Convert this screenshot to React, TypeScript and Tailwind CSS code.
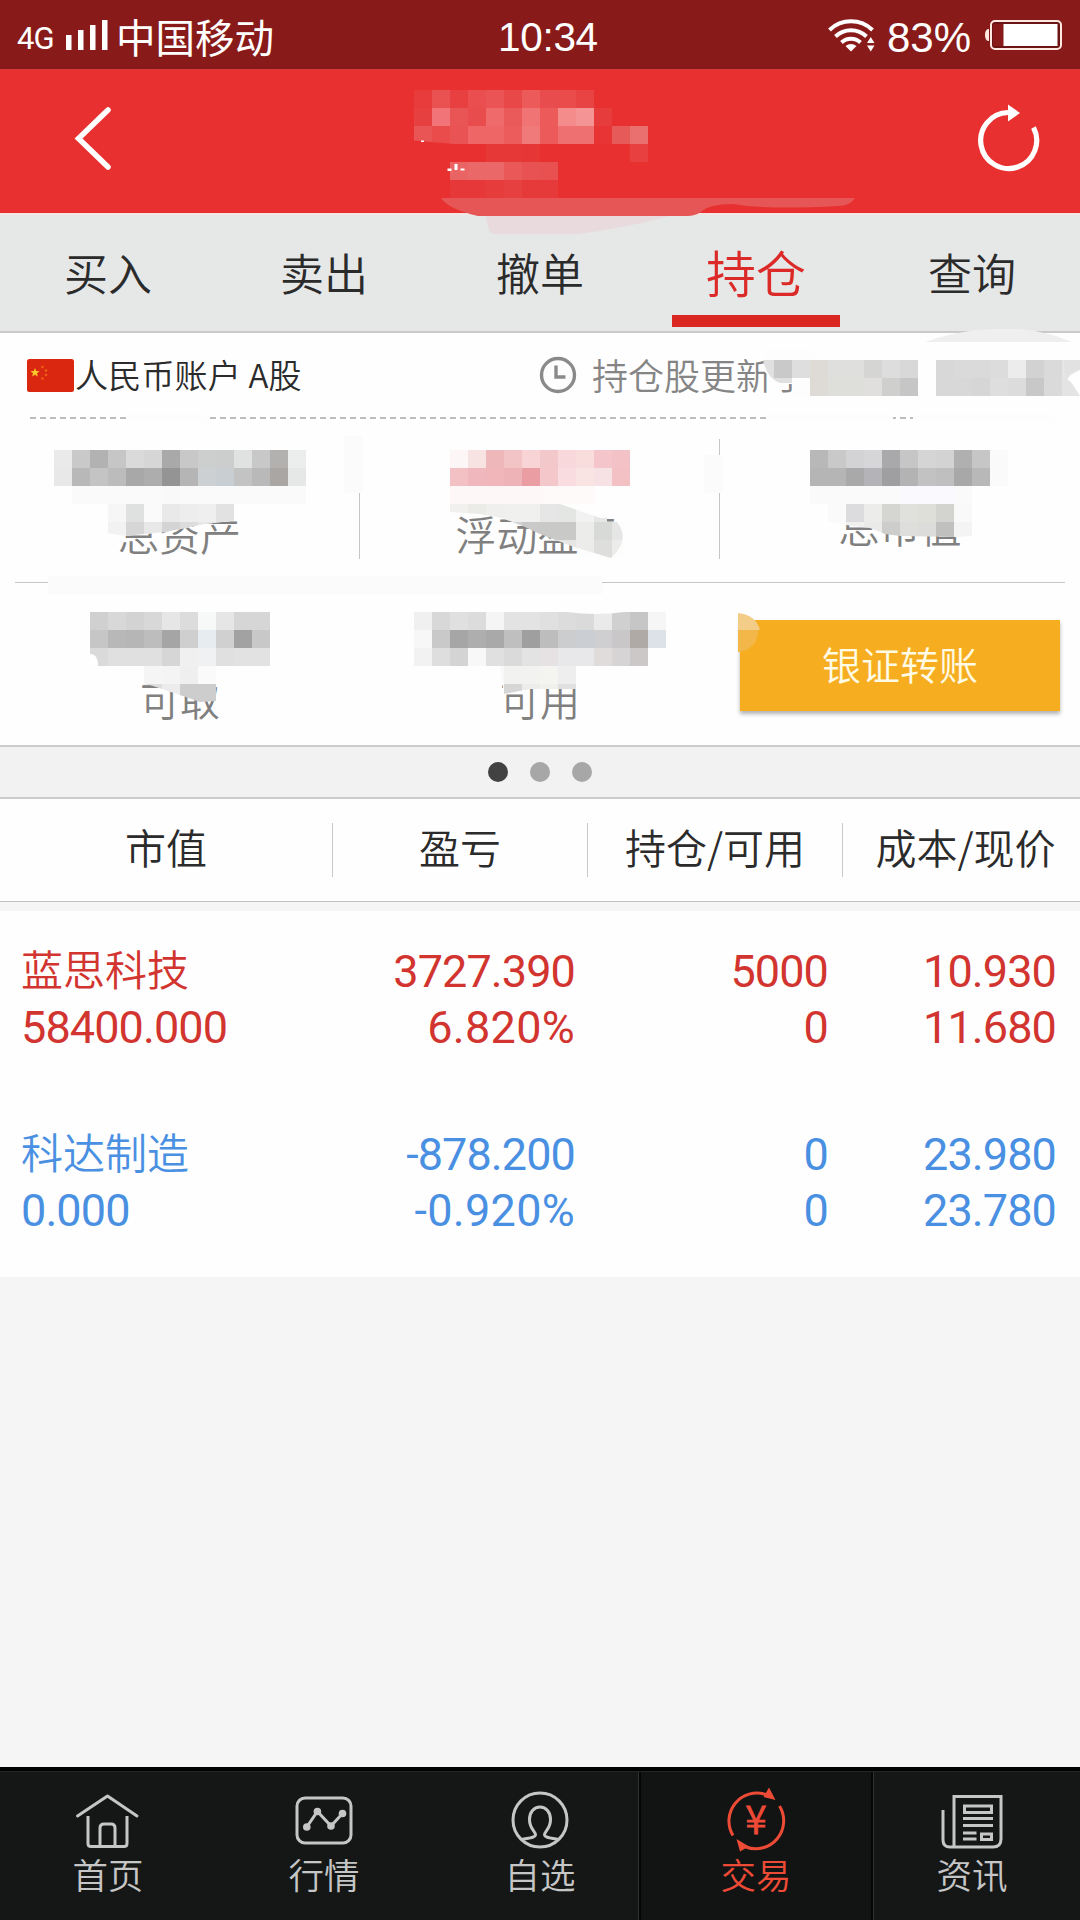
import type { ReactNode } from 'react'

const CELL = 18

const TABS = ['买入', '卖出', '撤单', '持仓', '查询']

const HOLDINGS = [
  {
    name: '蓝思科技',
    value: '58400.000',
    profit: ['3727.390', '6.820%'],
    amount: ['5000', '0'],
    price: ['10.930', '11.680'],
    color: 'text-[#d2342f]',
  },
  {
    name: '科达制造',
    value: '0.000',
    profit: ['-878.200', '-0.920%'],
    amount: ['0', '0'],
    price: ['23.980', '23.780'],
    color: 'text-[#4a90e2]',
  },
]

// One row of privacy blocks, colours separated by spaces ("-" leaves a gap)
function Blocks({ x, y, row }: { x: number; y: number; row: string }) {
  return (
    <g shapeRendering="crispEdges">
      {row.split(' ').map((c, i) =>
        c === '-' ? null : (
          <rect key={i} x={x + i * CELL} y={y} width={CELL} height={CELL} fill={`#${c}`} />
        )
      )}
    </g>
  )
}

function Overlay({ viewBox, children }: { viewBox: string; children: ReactNode }) {
  return (
    <svg className="pointer-events-none absolute inset-0 h-full w-full overflow-visible" viewBox={viewBox}>
      {children}
    </svg>
  )
}

function StatusBar() {
  return (
    <div className="flex h-[69px] items-center bg-[#881b1a] pl-[17px] pr-[18px] text-white">
      <div className="flex w-[481px] items-center">
        <span className="mt-2 w-[49px] font-['Roboto'] text-[31px] font-normal leading-none tracking-[-1px]">4G</span>
        <svg className="h-8 w-[42px]" viewBox="66 19 42 32" fill="#fff">
          <rect x="66" y="35" width="5.5" height="15" />
          <rect x="78" y="30" width="5.5" height="20" />
          <rect x="90" y="25" width="5.5" height="25" />
          <rect x="102" y="20" width="5.5" height="30" />
        </svg>
        <span className="ml-2 mt-0.5 text-[39.500px] font-normal leading-none">中国移动</span>
      </div>
      <span className="mt-1.5 font-['Liberation_Sans'] text-[40.500px] leading-none tracking-[-0.3px]">10:34</span>
      <div className="flex flex-1 items-center justify-end">
        <svg className="h-[34px] w-[48px]" viewBox="826 17 48 34" fill="none" stroke="#fff" strokeWidth="4">
          <path d="M828.5 29a31 31 0 0 1 43 0" />
          <path d="M834.5 35.500a22.500 22.500 0 0 1 31 0" />
          <path d="M840.500 41.500a14 14 0 0 1 19 0" />
          <path d="M844.500 45q5.500-4 11 0l-5.500 5.500z" fill="#fff" stroke="none" />
          <path d="M866 42h7.500l-3.750-6zM866 44.500h7.500l-3.750 6z" fill="#fff" stroke="none" />
        </svg>
        <span className="ml-3 mt-1.5 font-['Liberation_Sans'] text-[42px] leading-none">83%</span>
        <svg className="ml-[13px] h-8 w-[78px]" viewBox="984 18 78 32">
          <path d="M989 28h-1q-3 1-3 6t3 6h1z" fill="#ffe9e2" />
          <rect x="991" y="20" width="70" height="28" rx="4" fill="#6b1414" stroke="#ffe9e2" strokeWidth="2" />
          <rect x="993" y="23" width="11" height="22" fill="#881b1a" />
          <rect x="1003.500" y="23" width="54" height="22" fill="#fff" />
        </svg>
      </div>
    </div>
  )
}

function Header() {
  return (
    <header className="relative z-10 flex h-36 items-center justify-between border-t border-[#d43a37] bg-[#e7302f] pl-[74px] pr-[40px]">
      <svg className="mb-2 h-[66px] w-10" viewBox="74 105 40 66" fill="none" stroke="#fff" strokeWidth="5.500" strokeLinecap="round">
        <path d="M108 110 78.500 138.500 108 167" />
      </svg>
      <svg className="mb-2 h-[70px] w-[64px]" viewBox="976 104 64 70">
        <path d="M1008 113.500a28 28 0 1 0 25.500 15" fill="none" stroke="#fff" strokeWidth="5.200" />
        <path d="M1008 105.500v17l12-8.500z" fill="#fff" />
      </svg>
      <Overlay viewBox="0 70 1080 143">
        <Blocks x={414} y={90} row="e83b3b ea5252 e84040 ea4e4e ea5454 e94848 ec5a5a e94c4c ea4c4c e94444" />
        <Blocks x={414} y={108} row="e64040 f07478 e95555 e84c4c ef6a6a eb5a5a f07474 ec5a5a f58c8c f49494 e73c3c" />
        <Blocks x={414} y={126} row="e95454 ea4c4c e95353 ef6666 ef6666 ec5c5c f07a7a ec5a5a ee7070 ee7070 e83434 e75a5a ea7070" />
        <path d="M414 140.500l40 3.500h-40z" fill="#e7302f" />
        <Blocks x={486} y={144} row="e73838 e73838 e73636 - - - - - e84040" />
        <Blocks x={450} y={162} row="ea6464 eb6868 eb6868 ea5858 e95252 e95050" />
        <Blocks x={450} y={180} row="e63838 e63838 e63c3c e74040 e63a3a e63a3a" />
        <path d="M454.500 164h3v6h-3zM447.500 168.500h4v2.500h-4zM460.500 168.500h4v2h-4zM421 140.500h3v1.500h-3z" fill="#fff" />
        <path d="M441 198H855q-5 8-17 8-70 4-105-2-24 0-32 8-6 4-14 4H478q-30-7-37-18z" fill="#e65656" />
        <path d="M486 216H670Q620 229 578 234H494q-6 0-8-18z" fill="#e8dadd" />
      </Overlay>
    </header>
  )
}

function Tabs() {
  return (
    <nav className="grid h-[120px] grid-cols-5 border-t-2 border-b-2 border-t-[#f3e6e3] border-b-[#c9c9c9] bg-[#e6e7e7] text-center text-[44px] leading-[60px] text-[#2b2b2b]">
      {TABS.map((tab) =>
        tab === '持仓' ? (
          <div key={tab} className="flex flex-col items-center pt-[26px] text-[50px] text-[#db2a27]">
            {tab}
            <div className="mt-3.5 h-3 w-[168px] bg-[#db2722]" />
          </div>
        ) : (
          <div key={tab} className="pt-[27px]">
            {tab}
          </div>
        )
      )}
    </nav>
  )
}

function Flag() {
  return (
    <svg className="h-[33px] w-[47px]" viewBox="0 0 47 33">
      <rect width="47" height="33" rx="2.500" fill="#da2810" />
      <path d="m8 9 1.200 3 3.300.3-2.500 2 .8 3.200-2.800-1.800-2.800 1.800.8-3.200-2.500-2 3.300-.3z" fill="#fcc92c" />
      <g fill="#ec6018">
        <circle cx="15.500" cy="8" r="1.300" />
        <circle cx="19" cy="11.500" r="1.300" />
        <circle cx="19" cy="16" r="1.300" />
        <circle cx="15.500" cy="19.500" r="1.300" />
      </g>
    </svg>
  )
}

function AccountMask() {
  return (
    <Overlay viewBox="0 333 1080 412">
      <defs>
        <clipPath id="total">
          <path d="M108 504H240V520L205 524 165 532 124 536 108 533z" />
        </clipPath>
        <clipPath id="float">
          <path d="M450 504H560L600 518H607V522H617Q631 540 611 558L574 547 540 534 525 527 502 518 480 514 450 512z" />
        </clipPath>
        <clipPath id="market">
          <path d="M828 504H972V536L955 537 900 536 885 534 870 528 846 525 828 521z" />
        </clipPath>
        <clipPath id="take">
          <path d="M140 666H216V701L200 702 180 695 150 685 140 684z" />
        </clipPath>
        <clipPath id="use">
          <path d="M500 666H580V689H530L504 694z" />
        </clipPath>
      </defs>

      {/* update time */}
      <path d="M925 342Q955 331 990 329H1020Q1050 332 1072 342z" fill="#efefef" />
      <path d="M765 350H815V396H792V384H775L765 372z" fill="#fdfdfd" />
      <path d="M763 360H792V383H780Q767 378 763 360z" fill="#e0e0e0" />
      <Blocks x={774} y={360} row="c9c9c9 dedede dedbd6 dfdfdd dfdfdd d5d5d3 dddddd d8d8d8 - d8d8d8 dadada dadada dcdcdc ececec d2d2d2 dadada e6e6e6" />
      <Blocks x={810} y={378} row="dedbd6 dededb dededb e0dfdd cfcfcd c6c6c6 - d8d8d8 d8d8d8 d6d6d6 dedede dcdcdc c8c8c8 dadada e4e4e4" />
      <path d="M1080 370q-18 9-10 11 4 5 10 15z" fill="#fff" />
      <path d="M1064 360h16v10q-10-1-13 9-3-4-3-19z" fill="#e2e2e2" />

      {/* erased parts of the rules */}
      <path d="M127 414h80v8h-80zM768 414h125v8h-125zM913 414h140v8h-140z" fill="#fdfdfd" />
      <path d="M344 436h18v57h-18zM704 455h18v38h-18z" fill="#fbfbfb" />
      <path d="M48 576h554v18H48z" fill="#fbfbfb" />

      <Blocks x={54} y={450} row="eaeaea c9c9c9 b2b2b2 c6c6c6 dadada d6d6d6 a9a9a9 c8c8c8 cdcfcf cccece e0e1e1 c8c8c8 b3b1b0 eceded" />
      <Blocks x={54} y={468} row="e8e8e8 b8b8b8 c4c4c4 bcbcbc a8a8a8 adadad 949494 b5b5b5 ccd0d2 c9ced3 c3c3c3 b9b9b9 a9a6a4 e6e8e8" />
      <Blocks x={72} y={486} row="fafafa fafafa fafafa fafafa fafafa f9f9f9 fafafa fafafa fafafa fafafa fafafa fafafa fafafa" />
      <g clipPath="url(#total)">
        <rect x="108" y="504" width="140" height="36" fill="#fff" />
        <Blocks x={108} y={504} row="f6f6f6 dfe0e0 fafafa e9e9e9 ededed efefef e2e2e2" />
        <Blocks x={108} y={522} row="f2f2f2 d6d6d6 e8e8e8 d4d4d4 dcdcdc e6e6e6" />
      </g>

      <Blocks x={450} y={450} row="fdf6f6 f8e3e3 eeb8ba f2c4c6 f8d4d6 f3c8cb f8d8da f9dcdc f4c6cb f3c2c6" />
      <Blocks x={450} y={468} row="f3c0c4 f0b8bc f0b6ba eeb3b7 ea9da3 f4c8cb f9dcdf f9e3e3 f6e1e4 f3c0c4" />
      <Blocks x={450} y={486} row="fdf8f7 fdf8f7 fdf8f7 fdf8f7 fdf8f7 fdfaf9 fdfaf9 fdfaf9" />
      <path d="M580 514H607V522H624V558H580z" fill="#fdfdfd" />
      <g clipPath="url(#float)">
        <Blocks x={450} y={504} row="f1f0ee ebebe8 efefed f0f0ee f0f0ee e6e6e6 e4e6e4 f2f2f2 e6e6e6 f2f2f2" />
        <Blocks x={450} y={522} row="f1f0ee ebebe8 e4e4e4 d4d4d4 c9c9c9 c9c9c7 c9c9c7 ececea d8dad8 e6e6e6" />
        <Blocks x={540} y={540} row="e6e6e6 e6e6e6 ececea dededc ececea" />
      </g>

      <Blocks x={810} y={450} row="b8b8b8 c9c9c9 d3d3d5 d6d6d9 a9a9ab c6c6c6 d5d5d5 d3d3d3 b0b0b0 c6c6c6 fafafa" />
      <Blocks x={810} y={468} row="b5b5b5 b5b5b5 a9a9a9 b3b3b8 9f9fa1 b3b3b3 c2c2c2 bfbfbf a8a8a8 b8b8b8 fafafa" />
      <Blocks x={810} y={486} row="fafafa fafafa fafafa fafafa fafafa fafafe fafafe fafafe fafafa" />
      <g clipPath="url(#market)">
        <Blocks x={828} y={504} row="fafafa dcdcde ececea d5d5d2 e0e0dc dedfd9 d3d3cf f9f9f9" />
        <Blocks x={828} y={522} row="fafafa f0f0ee eaeae8 cdcdcb dededc dcdcda c0c0be f4f4f4" />
      </g>

      <Blocks x={90} y={612} row="d0d0d0 d8d8d8 d3d3d3 d8d8d8 e6e6e6 dcdcdc f7f8f8 e6e6e6 d6d6d6 d6d6d6" />
      <Blocks x={90} y={630} row="c6c6c6 b8b8b8 b6b6b6 bdbdbd a5a5a5 cfcfcf e6ecf0 d0d0d0 a2a2a2 c8c8c8" />
      <Blocks x={90} y={648} row="dadada e0e0e0 e0e0e0 e0e0e0 d6d6d6 f0f0f0 eff1f2 e0e0e0 e2e2e2 e2e2e2" />
      <path d="M90 654q8 0 8 12h-8z" fill="#fff" />
      <g clipPath="url(#take)">
        <Blocks x={144} y={666} row="f5f5f5 f4f4f4 efefef fafafa" />
        <Blocks x={144} y={684} row="dedede ececec cdcdcd cdcdcd" />
      </g>

      <Blocks x={414} y={612} row="f0f0f0 d8d8d8 e0e0e0 dcdcdc f5f5f5 e3e3e3 e3e3e3 e0e0e0 dcdcdc dadada eaeaea d0d0d0 c6c6c6 f6f6f6" />
      <Blocks x={414} y={630} row="f7f7f7 c9c9c9 a6a6a6 aeaeae a9a9a9 bfbfbf 9f9f9f bdbdbd cccdcf cbcfd3 cfcfd1 c9c7c7 b0aaa6 dde2e8" />
      <Blocks x={414} y={648} row="f2f2f2 dedede d4d4d4 f8f8f8 e0e0e0 dadada e3e3e3 e6e2e4 e8e8ea e8e8ea e0dcdc d6d4d4 ccc8c8" />
      <path d="M566 612h58q-26 4-58 0z" fill="#fdfdfd" />
      <g clipPath="url(#use)">
        <Blocks x={486} y={666} row="f8f8f8 f2f2f0 f2f2f0 f4f4f0 eeeeee" />
        <Blocks x={486} y={684} row="fafafa d6d6d6 ececea f0f0ec e0e0e0" />
      </g>

      <path d="M738 613q18 2 22 17h-22z" fill="#f3cd88" />
      <path d="M738 630h20q0 18-18 22h-2z" fill="#f3b649" />
    </Overlay>
  )
}

function Account() {
  return (
    <section className="relative h-[412px] bg-[#fefefe]">
      <div className="flex h-[84px] items-center pl-[27px]">
        <Flag />
        <span className="mb-0.5 w-[465px] pl-px text-[33px] leading-none tracking-[0.2px] text-[#2b2b2b]">人民币账户 A股</span>
        <svg className="h-[38px] w-[38px]" viewBox="0 0 38 38" fill="none" stroke="#8a8a8a" strokeWidth="3.400">
          <circle cx="19" cy="19" r="16.500" />
          <path d="M17 9.500V21h9.500" />
        </svg>
        <span className="mb-0.5 pl-[15px] text-[36px] leading-none text-[#858585]">持仓股更新于</span>
      </div>
      <div className="ml-[30px] mr-[27px] h-0.5 bg-[repeating-linear-gradient(90deg,#bdbdbd_0_6px,transparent_6px_10px)]" />

      <div className="mx-[15px] flex h-[164px] border-b border-[#c6c6c6] text-center text-[41px] leading-[42px] text-[#808080]">
        <p className="w-[344px] pr-[15px] pt-[93px]">总资产</p>
        <div className="mt-5 h-[120px] w-px bg-[#c6c6c6]" />
        <p className="w-[359px] pr-1 pt-[93px]">浮动盈亏</p>
        <div className="mt-5 h-[120px] w-px bg-[#c6c6c6]" />
        <p className="flex-1 pl-[15px] pt-[85px]">总市值</p>
      </div>

      <div className="flex text-center text-[40px] leading-[42px] text-[#808080]">
        <p className="w-[360px] pt-[95px]">可取</p>
        <p className="w-[360px] pt-[95px]">可用</p>
        <button className="ml-5 mt-[37px] h-[91px] w-80 bg-[#f6ae20] pb-1 text-[39px] leading-[87px] text-[#fffbe4] shadow-[0_3px_4px_rgba(0,0,0,0.3)]">
          银证转账
        </button>
      </div>
      <AccountMask />
    </section>
  )
}

function Pager() {
  return (
    <div className="flex h-[54px] items-center justify-center gap-[22px] border-y-2 border-[#cbcbcb] bg-[#f2f2f2]">
      <i className="h-5 w-5 rounded-full bg-[#424242]" />
      <i className="h-5 w-5 rounded-full bg-[#a7a7a7]" />
      <i className="h-5 w-5 rounded-full bg-[#a7a7a7]" />
    </div>
  )
}

function TableHead() {
  return (
    <div className="flex h-[103px] items-center border-b border-[#c0c0c0] bg-[#fefefe] text-center text-[41px] leading-[46px] text-[#2b2b2b]">
      <div className="h-[54px] w-[333px] border-r border-[#c9c9c9]">市值</div>
      <div className="h-[54px] w-[255px] border-r border-[#c9c9c9]">盈亏</div>
      <div className="h-[54px] w-[255px] border-r border-[#c9c9c9]">持仓/可用</div>
      <div className="h-[54px] flex-1 pl-2">成本/现价</div>
    </div>
  )
}

function Figures({ lines, className }: { lines: string[]; className: string }) {
  return (
    <div className={`text-right font-['Roboto'] text-[45px] font-normal ${className}`}>
      {lines.map((line, i) => (
        <p key={i} className={line.endsWith('%') ? 'tracking-[0.3px]' : 'tracking-[-0.9px]'}>
          {line}
        </p>
      ))}
    </div>
  )
}

function Holdings() {
  return (
    <div className="mt-[9px] bg-[#fefefe]">
      {HOLDINGS.map((h) => (
        <div key={h.name} className={`flex h-[183px] pl-[21px] pt-[33px] leading-[56px] ${h.color}`}>
          <div className="w-[280px]">
            <p className="-mt-1 mb-1 text-[42px]">{h.name}</p>
            <p className="font-['Roboto'] text-[45px] font-normal tracking-[-0.9px]">{h.value}</p>
          </div>
          <Figures lines={h.profit} className="w-[274px]" />
          <Figures lines={h.amount} className="w-[253px]" />
          <Figures lines={h.price} className="w-[228px]" />
        </div>
      ))}
    </div>
  )
}

function NavItem({ label, active, children }: { label: string; active?: boolean; children: ReactNode }) {
  return (
    <div className={`flex w-[216px] flex-col items-center pt-4 ${active ? 'text-[#ee4b37]' : 'text-[#c6c6c6]'}`}>
      <svg className="h-[68px] w-[68px]" viewBox="0 0 68 68" fill="none" stroke="currentColor" strokeWidth="3">
        {children}
      </svg>
      <span className="mt-px text-[35.500px] leading-9">{label}</span>
    </div>
  )
}

function BottomNav() {
  return (
    <nav className="relative mt-auto h-[153px] border-t-4 border-black bg-[#151716]">
      <div className="absolute inset-0 flex border-t border-[#252727]">
        <div className="ml-[638px] w-[236px] border-x border-[#303131] bg-[#111413] shadow-[inset_2px_0_0_#050505,inset_-2px_0_0_#050505]" />
      </div>
      <div className="relative flex">
        <NavItem label="首页">
          <path d="M3.500 29 33.500 9 63 29" strokeLinecap="round" strokeLinejoin="round" />
          <path d="M14 29v27.500q0 3 3 3h33q3 0 3-3V29" />
          <path d="M26 59.500V41q0-4 4-4h7q4 0 4 4v18.500" />
        </NavItem>
        <NavItem label="行情">
          <rect x="7" y="11" width="54" height="45" rx="8" />
          <path d="M16.800 40 27.400 24.500 41 39 52.500 26.500" />
          <g fill="currentColor" stroke="none">
            <circle cx="16.800" cy="40" r="3.800" />
            <circle cx="27.400" cy="24.500" r="3.800" />
            <circle cx="41" cy="39" r="3.800" />
            <circle cx="52.500" cy="26.500" r="3.800" />
          </g>
        </NavItem>
        <NavItem label="自选">
          <circle cx="34" cy="33" r="27" />
          <path d="M15.500 52.500C22 51 29 51 29.500 48c0-4-6-6-6-15.500C23.500 25 28 20 34 20s10.500 5 10.500 12.500c0 9.500-6 11.500-6 15.500.5 3 7.500 3 14 4.500" />
        </NavItem>
        <NavItem label="交易" active>
          <path d="M11 48.500A28 28 0 0 1 44 7.500M57.500 19A28 28 0 0 1 24 60" />
          <path d="M47 .5 53.500 13 41.500 10zM14.500 52 27 59.500 18 64.500z" fill="currentColor" stroke="none" />
          <text x="34" y="47" textAnchor="middle" fontSize="39" fill="currentColor" strokeWidth="0.800">
            ¥
          </text>
        </NavItem>
        <NavItem label="资讯">
          <path d="M5 23v30q0 7 7 7h43q8 0 8-8V9.500H16V60" />
          <path d="M26.500 19h27v6.500h-27zM25 31.500h30M25 38.500h30M25 46h13.500M25 52h13.500M43.500 47h10v5.500h-10z" />
        </NavItem>
      </div>
    </nav>
  )
}

export default function App() {
  return (
    <div className="flex h-[1920px] w-[1080px] flex-col overflow-hidden bg-[#f5f5f5] font-['Noto_Sans_CJK_SC',sans-serif] font-[350]">
      <StatusBar />
      <Header />
      <Tabs />
      <Account />
      <Pager />
      <TableHead />
      <Holdings />
      <BottomNav />
    </div>
  )
}
